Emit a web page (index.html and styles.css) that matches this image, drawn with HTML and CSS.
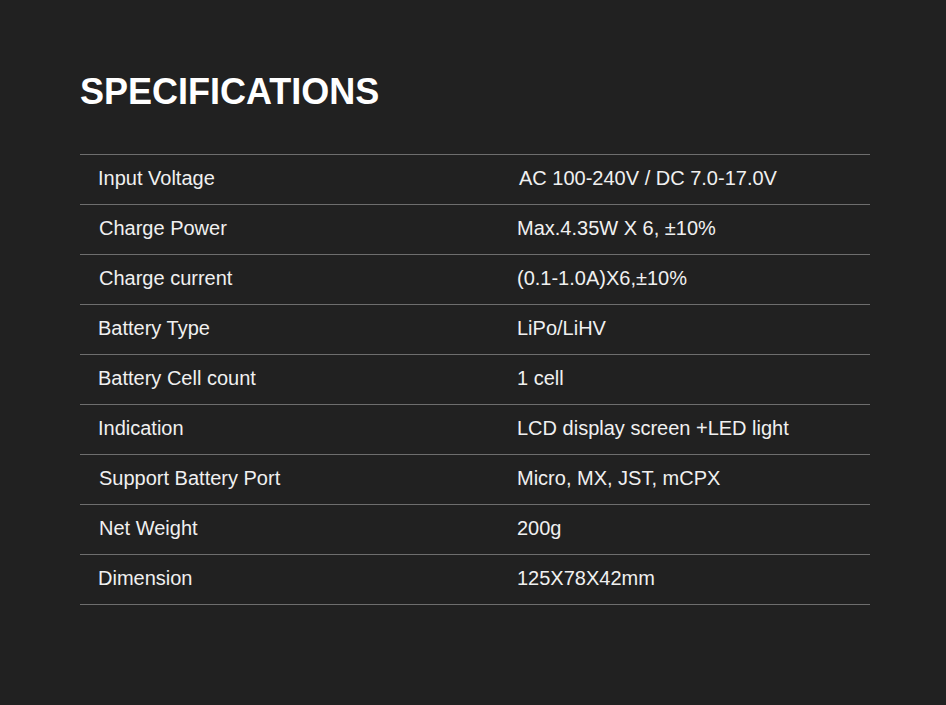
FILE: index.html
```html
<!DOCTYPE html>
<html>
<head>
<meta charset="utf-8">
<link rel="stylesheet" href="styles.css">
</head>
<body>
<main class="page">
  <h1 class="title">SPECIFICATIONS</h1>
  <div class="specs">
    <div class="row"><div class="k">Input Voltage</div><div class="v v-shift">AC 100-240V / DC 7.0-17.0V</div></div>
    <div class="row"><div class="k k-shift">Charge Power</div><div class="v">Max.4.35W X 6, ±10%</div></div>
    <div class="row"><div class="k k-shift">Charge current</div><div class="v">(0.1-1.0A)X6,±10%</div></div>
    <div class="row"><div class="k">Battery Type</div><div class="v">LiPo/LiHV</div></div>
    <div class="row"><div class="k">Battery Cell count</div><div class="v">1 cell</div></div>
    <div class="row"><div class="k">Indication</div><div class="v">LCD display screen +LED light</div></div>
    <div class="row"><div class="k k-shift">Support Battery Port</div><div class="v">Micro, MX, JST, mCPX</div></div>
    <div class="row"><div class="k k-shift">Net Weight</div><div class="v">200g</div></div>
    <div class="row"><div class="k">Dimension</div><div class="v">125X78X42mm</div></div>
  </div>
</main>
</body>
</html>
```
FILE: styles.css
```css
html, body {
  margin: 0;
  padding: 0;
  background: #212121;
}
body {
  font-family: "Liberation Sans", Arial, sans-serif;
  color: #f0f0f0;
}
.page {
  width: 790px;
  padding: 71px 0 0 80px;
}
.title {
  margin: 0;
  font-size: 36px;
  line-height: 42px;
  font-weight: bold;
  color: #ffffff;
}
.specs {
  margin-top: 41px;
  border-bottom: 1px solid #6e6e6e;
}
.row {
  display: grid;
  grid-template-columns: 420px 1fr;
  height: 49px;
  align-items: center;
  border-top: 1px solid #6e6e6e;
  font-size: 20px;
  line-height: 23px;
  padding-bottom: 2px;
  box-sizing: border-box;
  height: 50px;
}
.k {
  padding-left: 18px;
}
.k-shift {
  padding-left: 19px;
}
.v {
  padding-left: 17px;
}
.v-shift {
  padding-left: 19px;
}
```
